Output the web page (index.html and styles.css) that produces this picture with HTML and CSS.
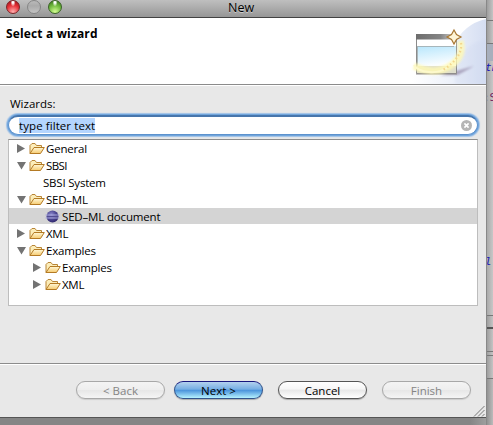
FILE: index.html
```html
<!DOCTYPE html>
<html lang="en">
<head>
<meta charset="utf-8">
<title>New</title>
<link rel="stylesheet" href="styles.css">
</head>
<body>
<svg class="defs" width="0" height="0" aria-hidden="true">
  <defs>
    <linearGradient id="fold" x1="0" y1="0" x2="0" y2="1"><stop offset="0" stop-color="#fff8d8"/><stop offset="1" stop-color="#f6cb70"/></linearGradient>
    <radialGradient id="orb" cx=".4" cy=".35" r=".7"><stop offset="0" stop-color="#8d8bd0"/><stop offset=".6" stop-color="#49438e"/><stop offset="1" stop-color="#2d2468"/></radialGradient>
    <symbol id="folder" viewBox="0 0 16 13">
      <path d="M1 11.500V3.500L3 1.500H6L7.500 3.500H12.500V6" fill="#fcedb9" stroke="#b88536"/>
      <path d="M1 11.500L5 5.500H15.300L11.500 11.500Z" fill="url(#fold)" stroke="#b47a24" stroke-linejoin="round"/>
    </symbol>
    <symbol id="right" viewBox="0 0 9 9"><path d="M0 0V9L8 4.500Z" fill="#737373"/></symbol>
    <symbol id="down" viewBox="0 0 9 9"><path d="M0 1H9L4.500 8.500Z" fill="#737373"/></symbol>
  </defs>
</svg>
<div class="screen">
  <main class="dialog">
    <div class="titlebar"><i class="light red"></i><i class="light gray"></i><i class="light green"></i><span class="title">New</span></div>
    <header class="header">
      <h1>Select a wizard</h1>
      <svg class="banner" width="86" height="66" viewBox="400 18 86 66">
        <defs>
          <linearGradient id="sky" x1="0" y1="0" x2="1" y2="0"><stop offset="0" stop-color="#fff"/><stop offset=".5" stop-color="#eef2fa"/><stop offset="1" stop-color="#d5def2"/></linearGradient>
          <linearGradient id="bar" x1="0" y1="0" x2="1" y2="0"><stop offset="0" stop-color="#6d6d6d"/><stop offset=".6" stop-color="#858585"/><stop offset="1" stop-color="#ddd"/></linearGradient>
          <linearGradient id="pane" x1="0" y1="0" x2=".25" y2="1"><stop offset="0" stop-color="#b7e6fc"/><stop offset="1" stop-color="#fafdff"/></linearGradient>
          <filter id="soft" x="-30%" y="-30%" width="160%" height="160%"><feGaussianBlur stdDeviation="1.300"/></filter>
        </defs>
        <path d="M412 84V76Q450 70 454 45Q464 24 486 19V84Z" fill="url(#sky)"/>
        <path d="M455 64Q464 44 486 39V84H455Z" fill="#c9d4ee" opacity=".22" filter="url(#soft)"/>
        <path d="M440 75.500L474 66L458 75Z" fill="#897b9c" opacity=".6" filter="url(#soft)"/>
        <path d="M416.500 35H456.500V73.500H416.500Z" fill="#fff" stroke="#8b8b8b"/>
        <path d="M416 34H457V39.500H416Z" fill="url(#bar)"/>
        <path d="M417 46H456V66H417Z" fill="url(#pane)"/>
        <path d="M417 46.500H454M417.500 47V66" stroke="#a0a9aa" opacity=".8" fill="none"/>
        <path d="M417 66H456V73H417Z" fill="#dfdecb"/>
        <path d="M416 74H457" stroke="#928d8c"/>
        <path d="M460 41Q465 56 450 66Q435 76 414 66" fill="none" stroke="#fff9b3" stroke-width="7" opacity=".8" filter="url(#soft)"/>
        <path d="M414 65Q417 71 429 72Q439 73 447 68" fill="none" stroke="#fdf9cc" stroke-width="2"/>
        <path d="M461 43Q463 57 443 70" fill="none" stroke="#f3d58b" stroke-width="2.200" stroke-dasharray="1.500 2.500"/>
        <path d="M454 30L456.500 34.500L461 37L456.500 39.500L454 44L451.500 39.500L447 37L451.500 34.500Z" fill="#fff5d6" stroke="#a87732" stroke-width="1.200"/>
      </svg>
    </header>
    <section class="content">
      <label class="caption">Wizards:</label>
      <div class="search">
        <span class="selection">type filter text</span>
        <svg width="11" height="11" viewBox="0 0 11 11"><circle cx="5.500" cy="5.500" r="5.500" fill="#b5b5b5"/><path d="M3.400 3.400L7.600 7.600M7.600 3.400L3.400 7.600" stroke="#fff" stroke-width="1.600"/></svg>
      </div>
      <div class="tree">
        <div class="row"><svg class="arrow"><use href="#right"/></svg><svg class="icon"><use href="#folder"/></svg><span class="general">General</span></div>
        <div class="row"><svg class="arrow"><use href="#down"/></svg><svg class="icon"><use href="#folder"/></svg><span class="sbsi">SBSI</span></div>
        <div class="row leaf"><span class="system">SBSI System</span></div>
        <div class="row"><svg class="arrow"><use href="#down"/></svg><svg class="icon"><use href="#folder"/></svg><span class="sedml">SED–ML</span></div>
        <div class="row document selected"><svg class="icon" viewBox="0 0 16 13"><circle cx="7.500" cy="6.500" r="6" fill="url(#orb)"/><path d="M.5 5H14.500M.5 8H14.500" stroke="#a9a8dc"/><path d="M2 6.500H13" stroke="#514c91"/></svg><span class="doc">SED–ML document</span></div>
        <div class="row"><svg class="arrow"><use href="#right"/></svg><svg class="icon"><use href="#folder"/></svg><span class="xml">XML</span></div>
        <div class="row"><svg class="arrow"><use href="#down"/></svg><svg class="icon"><use href="#folder"/></svg><span class="examples">Examples</span></div>
        <div class="row child"><svg class="arrow"><use href="#right"/></svg><svg class="icon"><use href="#folder"/></svg><span class="examples">Examples</span></div>
        <div class="row child"><svg class="arrow"><use href="#right"/></svg><svg class="icon"><use href="#folder"/></svg><span class="xml">XML</span></div>
      </div>
    </section>
    <footer class="footer">
      <button class="button disabled" disabled>&lt; Back</button>
      <button class="button primary">Next &gt;</button>
      <button class="button cancel">Cancel</button>
      <button class="button disabled finish" disabled>Finish</button>
      <svg class="grip" width="12" height="12" viewBox="0 0 12 12"><path d="M1 11.500L11.500 1M5 11.500L11.500 5M9 11.500L11.500 9" stroke="#777"/></svg>
    </footer>
  </main>
  <aside class="behind">
    <div class="pane tab"></div>
    <div class="pane toolbar"></div>
    <div class="pane stripe"></div>
    <div class="pane editor"><code class="blue">th</code><code class="purple">:S</code><code class="blue lower">l.</code></div>
    <div class="pane sash"></div>
    <div class="pane lowertab"></div>
    <div class="pane gap"></div>
    <div class="pane view"></div>
    <div class="pane rest"></div>
  </aside>
</div>
</body>
</html>
```
FILE: styles.css
```css
* { box-sizing: border-box; }
body { margin: 0; font: 11.5px/17px "Open Sans", "Noto Sans", sans-serif; color: #000; }
.defs { position: absolute; }
.screen { display: flex; width: 493px; height: 425px; overflow: hidden; background: linear-gradient(90deg, #858585 0 470px, #a4a4a4 490px); }
.dialog { width: 486px; height: 418px; display: flex; flex-direction: column; background: #e8e8e8; border-bottom: 1px solid #555; flex: none; }
.titlebar { height: 18px; display: flex; align-items: flex-start; padding-left: 6px; gap: 7px; background: linear-gradient(#bfbfbf, #969696); border-bottom: 1px solid #424242; position: relative; flex: none; }
.light { width: 14px; height: 14px; border-radius: 50%; border: 1px solid #666; }
.red { background: radial-gradient(ellipse at 50% 8%, #fff 0 9%, transparent 30%), radial-gradient(circle at 50% 90%, #ffb0b0, #e62e35 55%, #8b1018); border-color: #7b2528; }
.gray { background: linear-gradient(#bbb, #aaa 40%, #c3c3c3); border-color: #858585; }
.green { background: radial-gradient(ellipse at 50% 8%, #fff 0 9%, transparent 30%), radial-gradient(circle at 50% 90%, #d5ff94, #6fb83d 55%, #316817); border-color: #3b6327; }
.title { position: absolute; left: 228px; top: 0; font-size: 12.5px; line-height: 15px; text-shadow: 0 1px #ccc; }
.header { height: 68px; display: flex; justify-content: space-between; background: #fff; border-bottom: 1px solid #fff; box-shadow: inset 0 -1px #8b8b8b; flex: none; }
h1 { margin: 7px 0 0 6px; font-size: 12px; line-height: 17px; font-weight: 700; letter-spacing: .15px; }
.banner { display: block; }
.content { flex: 1; padding: 9px 8px 0; display: flex; flex-direction: column; }
.caption { margin-left: 2px; height: 20px; line-height: 17px; }
.search { height: 20px; padding: 0 5px 0 10px; display: flex; justify-content: space-between; align-items: center; background: #fff; border: 1px solid #5d92cd; border-top: 2px solid #4776ac; border-radius: 10px; box-shadow: 0 0 1px 1px #6ca2db, 0 0 1px 2px #a7c6e8; }
.selection { background: #b4d5fe; line-height: 15px; height: 15px; letter-spacing: .08px; }
.tree { height: 167px; margin-top: 4px; background: #fff; border: 1px solid #bdbdbd; border-top-color: #8d8d8d; flex: none; }
.row { height: 17px; display: flex; align-items: center; padding-left: 8px; white-space: nowrap; }
.arrow { width: 9px; height: 9px; margin-right: 3px; flex: none; }
.icon { width: 16px; height: 13px; margin-right: 1px; flex: none; }
.general, .system, .examples { letter-spacing: -.2px; }
.doc { letter-spacing: -.17px; }
.sedml { letter-spacing: -.25px; }
.sbsi { letter-spacing: -.6px; }
.xml { letter-spacing: -.3px; }
.leaf { padding-left: 34px; }
.child { padding-left: 24px; }
.document { padding-left: 36px; }
.selected { height: 16px; margin-bottom: 1px; background: #d4d4d4; }
.footer { height: 54px; display: flex; align-items: flex-start; padding: 17px 0 0 76px; border-top: 1px solid #8c8c8c; box-shadow: inset 0 1px #fff; position: relative; flex: none; }
.button { width: 89px; height: 18px; padding: 0; margin-right: 9px; border: 1px solid #555; border-radius: 9px; background: linear-gradient(#fff, #f6f6f6 45%, #e7e7e7 50%, #fff); font: inherit; line-height: 15px; color: #000; box-shadow: 0 1px 1px #aaa; }
.primary { background: linear-gradient(#b3d1ee, #76aee3 45%, #4b94dc 52%, #b5f2ff); border-color: #31548c; border-top-color: #17177d; margin-right: 15px; }
.cancel { margin-right: 15px; }
.disabled { color: #858585; border-color: #a8a8a8; background: linear-gradient(#f4f4f4, #eee 48%, #e7e7e7 52%, #f5f5f5); box-shadow: 0 1px 1px #ccc; }
.grip { position: absolute; right: 1px; bottom: 0; }
.behind { width: 7px; height: 425px; display: flex; flex-direction: column; border-left: 1px solid #888; overflow: hidden; }
.pane { background: linear-gradient(90deg, #9e9e9e, #c4c4c4); flex: none; }
.tab { height: 21px; border-bottom: 1px solid #777; }
.toolbar { height: 23px; border-bottom: 1px solid #777; }
.stripe { height: 17px; background: #a7afbc; }
.editor { height: 255px; background: linear-gradient(90deg, #aaa, #c7c7c7); display: flex; flex-direction: column; border-bottom: 1px solid #777; }
code { font: 11px/14px "DejaVu Sans Mono", monospace; white-space: nowrap; }
.blue { color: #1818b6; font-style: italic; margin-left: -2px; }
.purple { color: #6e185c; margin-top: 16px; margin-left: -4px; }
.lower { margin-top: 150px; }
.sash { height: 13px; border-bottom: 2px solid #555; }
.lowertab { height: 23px; border-bottom: 1px solid #777; }
.gap { height: 4px; border-bottom: 1px solid #777; }
.view { height: 23px; border-bottom: 1px solid #777; }
.rest { flex: 1; background: linear-gradient(90deg, #929292, #bbb); }
```
